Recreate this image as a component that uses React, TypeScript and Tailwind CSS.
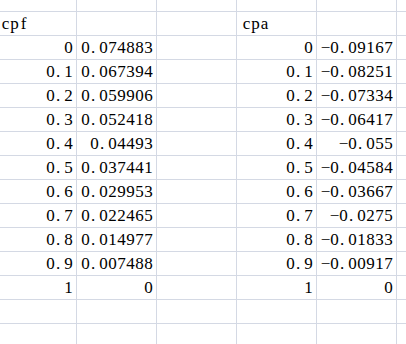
const rows: [string, string, string, string][] = [
  ["0", "0.074883", "0", "−0.09167"],
  ["0.1", "0.067394", "0.1", "−0.08251"],
  ["0.2", "0.059906", "0.2", "−0.07334"],
  ["0.3", "0.052418", "0.3", "−0.06417"],
  ["0.4", "0.04493", "0.4", "−0.055"],
  ["0.5", "0.037441", "0.5", "−0.04584"],
  ["0.6", "0.029953", "0.6", "−0.03667"],
  ["0.7", "0.022465", "0.7", "−0.0275"],
  ["0.8", "0.014977", "0.8", "−0.01833"],
  ["0.9", "0.007488", "0.9", "−0.00917"],
  ["1", "0", "1", "0"],
];

// half-width monospace cells, like SimSun in a spreadsheet
function Mono({ text }: { text: string }) {
  return (
    <span className="inline-flex">
      {text.split("").map((ch, i) => (
        <span
          key={i}
          className={`inline-flex w-[9px] overflow-visible ${
            ch === "." ? "justify-start pl-px" : "justify-center"
          }`}
        >
          {ch}
        </span>
      ))}
    </span>
  );
}

function Row({
  cells,
  first,
  header,
}: {
  cells: string[];
  first?: boolean;
  header?: boolean;
}) {
  const h = first ? "h-[12px]" : "h-[24px]";
  const base = `${h} border-b border-r border-[#d4d9e4] flex items-end pb-[3px] shrink-0`;
  return (
    <div className="flex">
      {cells.map((c, i) => {
        const w = i === 0 ? "w-[77px]" : i === 5 ? "flex-1 border-r-0" : "w-[80px]";
        const align = header ? "justify-start" : "justify-end";
        const pad = header ? (i === 0 ? "pl-px" : "pl-[5px]") : "pr-[3px]";
        return (
          <div key={i} className={`${base} ${w} ${align} ${pad}`}>
            {c && <Mono text={c} />}
          </div>
        );
      })}
    </div>
  );
}

export default function App() {
  return (
    <div
      className="w-[406px] h-[344px] overflow-hidden bg-white text-black text-[17px] leading-none"
      style={{ fontFamily: '"Liberation Serif", "Noto Sans CJK SC", serif' }}
    >
      <Row first cells={["", "", "", "", "", ""]} />
      <Row header cells={["cpf", "", "", "cpa", "", ""]} />
      {rows.map((r, i) => (
        <Row key={i} cells={[r[0], r[1], "", r[2], r[3], ""]} />
      ))}
      <Row cells={["", "", "", "", "", ""]} />
      <Row cells={["", "", "", "", "", ""]} />
    </div>
  );
}
